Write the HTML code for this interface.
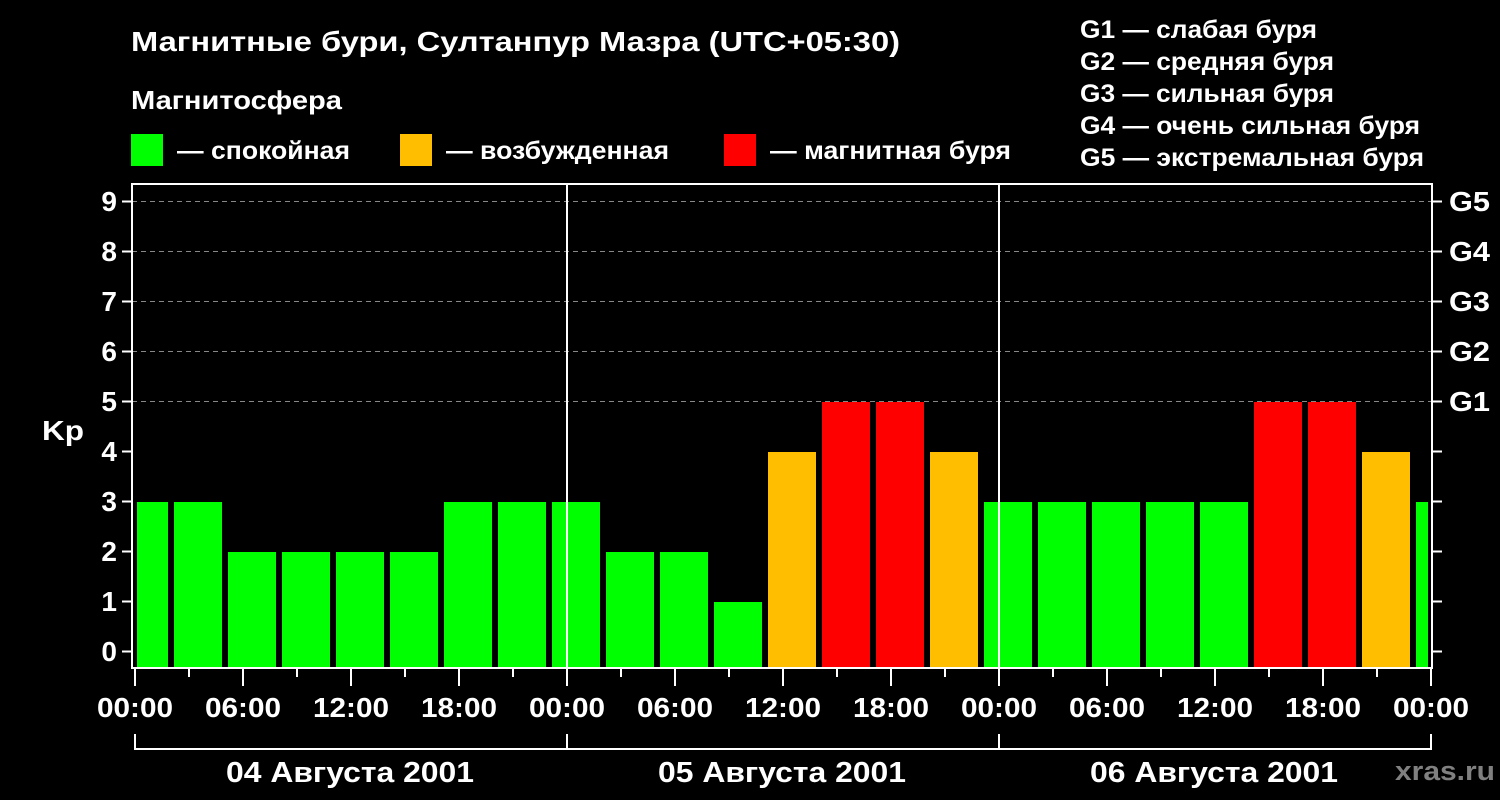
<!DOCTYPE html>
<html><head><meta charset="utf-8"><style>
html,body{margin:0;padding:0;background:#000;}
svg{display:block;font-family:"Liberation Sans",sans-serif;font-weight:bold;}
</style></head><body>
<svg width="1500" height="800" viewBox="0 0 1500 800" xmlns="http://www.w3.org/2000/svg">
<rect width="1500" height="800" fill="#000"/>
<text x="131" y="51" fill="#fff" font-size="28" textLength="769" lengthAdjust="spacingAndGlyphs">Магнитные бури, Султанпур Мазра (UTC+05:30)</text>
<text x="131" y="109" fill="#fff" font-size="26" textLength="211" lengthAdjust="spacingAndGlyphs">Магнитосфера</text>
<rect x="131" y="134" width="32" height="32" fill="#00ff00"/>
<text x="177" y="159" fill="#fff" font-size="25" textLength="173" lengthAdjust="spacingAndGlyphs">— спокойная</text>
<rect x="400" y="134" width="32" height="32" fill="#ffbf00"/>
<text x="446" y="159" fill="#fff" font-size="25" textLength="223" lengthAdjust="spacingAndGlyphs">— возбужденная</text>
<rect x="724" y="134" width="32" height="32" fill="#ff0000"/>
<text x="770" y="159" fill="#fff" font-size="25" textLength="241" lengthAdjust="spacingAndGlyphs">— магнитная буря</text>
<g fill="#fff" font-size="25" lengthAdjust="spacingAndGlyphs">
<text x="1080" y="38" textLength="237" lengthAdjust="spacingAndGlyphs">G1 — слабая буря</text>
<text x="1080" y="70" textLength="254" lengthAdjust="spacingAndGlyphs">G2 — средняя буря</text>
<text x="1080" y="102" textLength="254" lengthAdjust="spacingAndGlyphs">G3 — сильная буря</text>
<text x="1080" y="134" textLength="340" lengthAdjust="spacingAndGlyphs">G4 — очень сильная буря</text>
<text x="1080" y="166" textLength="344" lengthAdjust="spacingAndGlyphs">G5 — экстремальная буря</text>
</g>
<g stroke="#888" stroke-width="1" stroke-dasharray="5,4">
<line x1="132" y1="201.5" x2="1432" y2="201.5"/>
<line x1="132" y1="251.5" x2="1432" y2="251.5"/>
<line x1="132" y1="301.5" x2="1432" y2="301.5"/>
<line x1="132" y1="351.5" x2="1432" y2="351.5"/>
<line x1="132" y1="401.5" x2="1432" y2="401.5"/>
</g>
<g>
<rect x="137" y="502" width="31" height="166" fill="#00ff00"/>
<rect x="174" y="502" width="48" height="166" fill="#00ff00"/>
<rect x="228" y="552" width="48" height="116" fill="#00ff00"/>
<rect x="282" y="552" width="48" height="116" fill="#00ff00"/>
<rect x="336" y="552" width="48" height="116" fill="#00ff00"/>
<rect x="390" y="552" width="48" height="116" fill="#00ff00"/>
<rect x="444" y="502" width="48" height="166" fill="#00ff00"/>
<rect x="498" y="502" width="48" height="166" fill="#00ff00"/>
<rect x="552" y="502" width="48" height="166" fill="#00ff00"/>
<rect x="606" y="552" width="48" height="116" fill="#00ff00"/>
<rect x="660" y="552" width="48" height="116" fill="#00ff00"/>
<rect x="714" y="602" width="48" height="66" fill="#00ff00"/>
<rect x="768" y="452" width="48" height="216" fill="#ffbf00"/>
<rect x="822" y="402" width="48" height="266" fill="#ff0000"/>
<rect x="876" y="402" width="48" height="266" fill="#ff0000"/>
<rect x="930" y="452" width="48" height="216" fill="#ffbf00"/>
<rect x="984" y="502" width="48" height="166" fill="#00ff00"/>
<rect x="1038" y="502" width="48" height="166" fill="#00ff00"/>
<rect x="1092" y="502" width="48" height="166" fill="#00ff00"/>
<rect x="1146" y="502" width="48" height="166" fill="#00ff00"/>
<rect x="1200" y="502" width="48" height="166" fill="#00ff00"/>
<rect x="1254" y="402" width="48" height="266" fill="#ff0000"/>
<rect x="1308" y="402" width="48" height="266" fill="#ff0000"/>
<rect x="1362" y="452" width="48" height="216" fill="#ffbf00"/>
<rect x="1416" y="502" width="12" height="166" fill="#00ff00"/>
</g>
<g stroke="#fff" stroke-width="2">
<line x1="567" y1="183" x2="567" y2="668"/>
<line x1="999" y1="183" x2="999" y2="668"/>
</g>
<rect x="132" y="184" width="1300" height="484" fill="none" stroke="#fff" stroke-width="2"/>
<g stroke="#fff" stroke-width="2">
<line x1="122" y1="201.5" x2="132" y2="201.5"/><line x1="122" y1="251.5" x2="132" y2="251.5"/>
<line x1="122" y1="301.5" x2="132" y2="301.5"/><line x1="122" y1="351.5" x2="132" y2="351.5"/>
<line x1="122" y1="401.5" x2="132" y2="401.5"/><line x1="122" y1="451.5" x2="132" y2="451.5"/>
<line x1="122" y1="501.5" x2="132" y2="501.5"/><line x1="122" y1="551.5" x2="132" y2="551.5"/>
<line x1="122" y1="601.5" x2="132" y2="601.5"/><line x1="122" y1="651.5" x2="132" y2="651.5"/>
<line x1="1432" y1="201.5" x2="1442" y2="201.5"/><line x1="1432" y1="251.5" x2="1442" y2="251.5"/>
<line x1="1432" y1="301.5" x2="1442" y2="301.5"/><line x1="1432" y1="351.5" x2="1442" y2="351.5"/>
<line x1="1432" y1="401.5" x2="1442" y2="401.5"/><line x1="1432" y1="451.5" x2="1442" y2="451.5"/>
<line x1="1432" y1="501.5" x2="1442" y2="501.5"/><line x1="1432" y1="551.5" x2="1442" y2="551.5"/>
<line x1="1432" y1="601.5" x2="1442" y2="601.5"/><line x1="1432" y1="651.5" x2="1442" y2="651.5"/>
</g>
<g fill="#fff" font-size="28" text-anchor="end">
<text x="117" y="211">9</text><text x="117" y="261">8</text><text x="117" y="311">7</text>
<text x="117" y="361">6</text><text x="117" y="411">5</text><text x="117" y="461">4</text>
<text x="117" y="511">3</text><text x="117" y="561">2</text><text x="117" y="611">1</text>
<text x="117" y="661">0</text>
</g>
<text x="42" y="440" fill="#fff" font-size="28" textLength="42" lengthAdjust="spacingAndGlyphs">Kp</text>
<g fill="#fff" font-size="28">
<text x="1449" y="211" textLength="41" lengthAdjust="spacingAndGlyphs">G5</text><text x="1449" y="261" textLength="41" lengthAdjust="spacingAndGlyphs">G4</text><text x="1449" y="311" textLength="41" lengthAdjust="spacingAndGlyphs">G3</text>
<text x="1449" y="361" textLength="41" lengthAdjust="spacingAndGlyphs">G2</text><text x="1449" y="411" textLength="41" lengthAdjust="spacingAndGlyphs">G1</text>
</g>
<g stroke="#fff" stroke-width="2">
<line x1="135" y1="668" x2="135" y2="686"/><line x1="189" y1="668" x2="189" y2="677"/>
<line x1="243" y1="668" x2="243" y2="686"/><line x1="297" y1="668" x2="297" y2="677"/>
<line x1="351" y1="668" x2="351" y2="686"/><line x1="405" y1="668" x2="405" y2="677"/>
<line x1="459" y1="668" x2="459" y2="686"/><line x1="513" y1="668" x2="513" y2="677"/>
<line x1="567" y1="668" x2="567" y2="686"/><line x1="621" y1="668" x2="621" y2="677"/>
<line x1="675" y1="668" x2="675" y2="686"/><line x1="729" y1="668" x2="729" y2="677"/>
<line x1="783" y1="668" x2="783" y2="686"/><line x1="837" y1="668" x2="837" y2="677"/>
<line x1="891" y1="668" x2="891" y2="686"/><line x1="945" y1="668" x2="945" y2="677"/>
<line x1="999" y1="668" x2="999" y2="686"/><line x1="1053" y1="668" x2="1053" y2="677"/>
<line x1="1107" y1="668" x2="1107" y2="686"/><line x1="1161" y1="668" x2="1161" y2="677"/>
<line x1="1215" y1="668" x2="1215" y2="686"/><line x1="1269" y1="668" x2="1269" y2="677"/>
<line x1="1323" y1="668" x2="1323" y2="686"/><line x1="1377" y1="668" x2="1377" y2="677"/>
<line x1="1431" y1="668" x2="1431" y2="686"/>
</g>
<g fill="#fff" font-size="28" text-anchor="middle">
<text x="135" y="717" textLength="76" lengthAdjust="spacingAndGlyphs">00:00</text><text x="243" y="717" textLength="76" lengthAdjust="spacingAndGlyphs">06:00</text><text x="351" y="717" textLength="76" lengthAdjust="spacingAndGlyphs">12:00</text>
<text x="459" y="717" textLength="76" lengthAdjust="spacingAndGlyphs">18:00</text><text x="567" y="717" textLength="76" lengthAdjust="spacingAndGlyphs">00:00</text><text x="675" y="717" textLength="76" lengthAdjust="spacingAndGlyphs">06:00</text>
<text x="783" y="717" textLength="76" lengthAdjust="spacingAndGlyphs">12:00</text><text x="891" y="717" textLength="76" lengthAdjust="spacingAndGlyphs">18:00</text><text x="999" y="717" textLength="76" lengthAdjust="spacingAndGlyphs">00:00</text>
<text x="1107" y="717" textLength="76" lengthAdjust="spacingAndGlyphs">06:00</text><text x="1215" y="717" textLength="76" lengthAdjust="spacingAndGlyphs">12:00</text><text x="1323" y="717" textLength="76" lengthAdjust="spacingAndGlyphs">18:00</text>
<text x="1431" y="717" textLength="76" lengthAdjust="spacingAndGlyphs">00:00</text>
</g>
<g stroke="#fff" stroke-width="2" fill="none">
<polyline points="135,734 135,749 1431,749 1431,734"/>
<line x1="567" y1="734" x2="567" y2="749"/>
<line x1="999" y1="734" x2="999" y2="749"/>
</g>
<g fill="#fff" font-size="29" text-anchor="middle">
<text x="350" y="782" textLength="248" lengthAdjust="spacingAndGlyphs">04 Августа 2001</text>
<text x="782" y="782" textLength="248" lengthAdjust="spacingAndGlyphs">05 Августа 2001</text>
<text x="1214" y="782" textLength="248" lengthAdjust="spacingAndGlyphs">06 Августа 2001</text>
</g>
<text x="1395" y="780" fill="#808080" font-size="27" textLength="100" lengthAdjust="spacingAndGlyphs">xras.ru</text>
</svg>
</body></html>
